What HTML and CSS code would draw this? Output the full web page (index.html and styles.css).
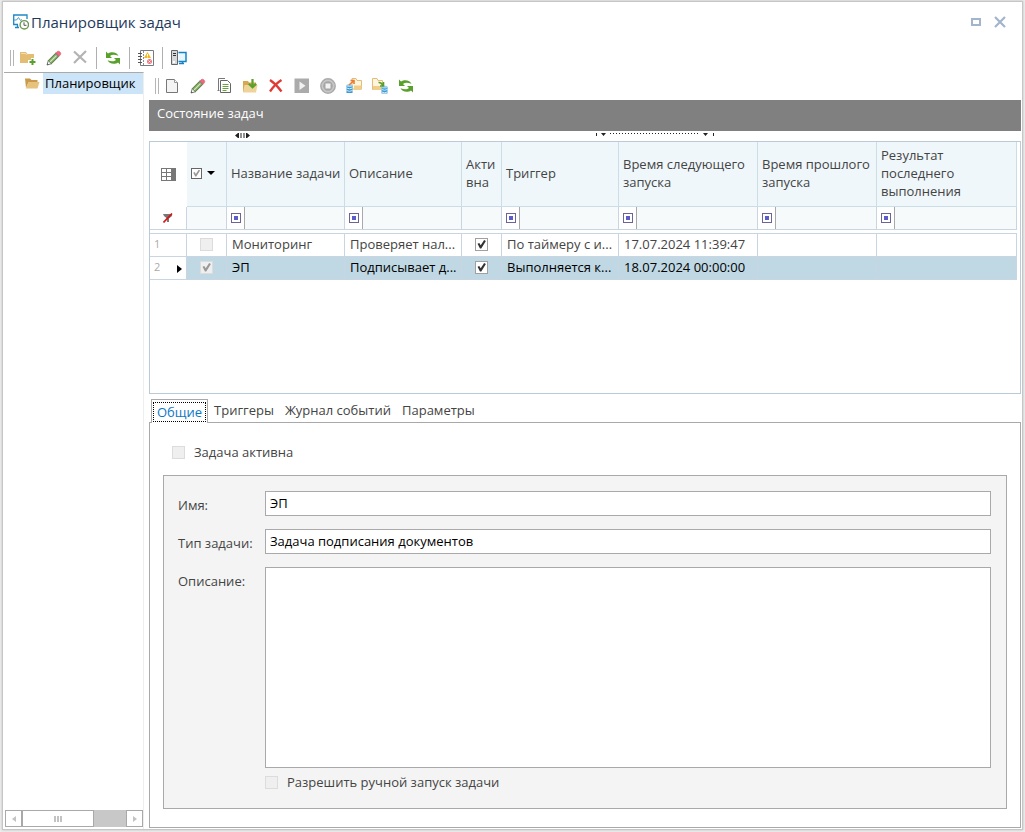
FILE: index.html
```html
<!DOCTYPE html>
<html lang="ru">
<head>
<meta charset="utf-8">
<title>Планировщик задач</title>
<link rel="stylesheet" href="styles.css">
</head>
<body>
<svg class="sprite" aria-hidden="true">
  <symbol id="i-pencil" viewBox="0 0 16 16">
    <path d="M1 15 2.300 10.500 5.500 13.700z" fill="#fff" stroke="#777" stroke-width="1"/>
    <path d="M2.300 10.500 9.800 3 13 6.200 5.500 13.700z" fill="#7da65a" stroke="#5b7a45" stroke-width="1"/>
    <path d="M4 12 11.400 4.600" stroke="#d3e6c3" stroke-width="1.200"/>
    <path d="M9.800 3 11 1.800Q12.500.500 14 2T14.200 5L13 6.200z" fill="#ee6a78" stroke="#d9536a" stroke-width=".6"/>
    <path d="M9.300 3.500 12.500 6.700" stroke="#888" stroke-width="1.200"/>
    <path d="M1 15 1.500 13.200 2.800 14.500z" fill="#555"/>
  </symbol>
  <symbol id="i-refresh" viewBox="0 0 16 16">
    <path d="M1 1.500V8H7L5 6C7 4.500 9.500 4.300 13.500 5.800 12.500 3 7 .5 3 3.600z" fill="#5aa02c"/>
    <path d="M15 14.500V8H9L11 10C9 11.500 6.500 11.700 2.500 10.200 3.500 13 9 15.500 13 12.400z" fill="#5aa02c"/>
  </symbol>
</svg>
<div class="window">
  <header class="titlebar">
    <svg class="icon" viewBox="0 0 16 16"><path d="M5 10.500H.700V1H14V5" fill="none" stroke="#1e88c7" stroke-width="1.300"/><path d="M1 6H3.500L5.500 3.500 7.500 6.500 9 5.500" fill="none" stroke="#4a9bcb" stroke-width="1"/><path d="M2 13.500H6M4.500 11V13" stroke="#1e88c7" stroke-width="1.300"/><circle cx="11.300" cy="10.800" r="4.200" fill="#fff" stroke="#6a9c4c" stroke-width="1.400"/><path d="M11 8.300V11.300H13.500" fill="none" stroke="#555" stroke-width="1"/></svg>
    <h1>Планировщик задач</h1>
    <div class="window-buttons">
      <button aria-label="Развернуть"><svg width="10" height="8"><path d="M1 1H9V7H1z" fill="none" stroke="#a2b5cd" stroke-width="2"/></svg></button>
      <button aria-label="Закрыть"><svg width="12" height="12"><path d="M1 1 11 11M11 1 1 11" stroke="#a2b5cd" stroke-width="2.200"/></svg></button>
    </div>
  </header>
  <div class="toolbar toolbar-main">
    <span class="grip"></span>
    <button aria-label="Создать папку"><svg class="icon" viewBox="0 0 16 16"><path d="M0 2H6L7.500 4H14V8H11V10H8V13H0z" fill="#e3bd74"/><path d="M1 3.500H6L7 5" stroke="#f0dcae" fill="none"/><path d="M12.500 9V15M9.500 12H15.500" stroke="#5aa02c" stroke-width="2"/></svg></button>
    <button aria-label="Изменить"><svg class="icon"><use href="#i-pencil"/></svg></button>
    <button aria-label="Удалить"><svg class="icon" viewBox="0 0 16 16"><path d="M2 1.500 14 12.500M14 1 2 13" stroke="#b3b3b3" stroke-width="2.200"/></svg></button>
    <span class="sep"></span>
    <button aria-label="Обновить"><svg class="icon"><use href="#i-refresh"/></svg></button>
    <span class="sep"></span>
    <button aria-label="Журнал"><svg class="icon" viewBox="0 0 16 16"><path d="M2.500.5H15.500V15.500H2.500z" fill="#fff" stroke="#777b80"/><path d="M5.500 1V15" stroke="#8a8d91" stroke-dasharray="2 1"/><path d="M0 3.500H4M0 6.500H4M0 9.500H4M0 12.500H4" stroke="#555" /><path d="M9.500 2 13 8H6z" fill="#f3b81c"/><path d="M9.500 4V6M9.500 6.500V7.500" stroke="#fff"/><circle cx="11.500" cy="11.500" r="2.500" fill="#e77980"/><path d="M10.500 10.500 12.500 12.500M12.500 10.500 10.500 12.500" stroke="#fff" stroke-width=".8"/></svg></button>
    <span class="sep"></span>
    <button aria-label="Серверы"><svg class="icon" viewBox="0 0 16 16"><path d="M.5.5H6.500V14.500H.5z" fill="#d8d8d8" stroke="#63676b"/><path d="M2 3.500H5M2 5.500H5" stroke="#333"/><path d="M2 12H4" stroke="#fff" stroke-width="2"/><path d="M7.500 2.500H15V11.500H7.500" fill="#eaf6fd" stroke="#1484c8" stroke-width="1.500"/><path d="M8 13.500H13M11.500 11.500V13.500" stroke="#1484c8" stroke-width="1.500"/></svg></button>
  </div>
  <div class="workspace">
    <aside class="sidebar">
      <div class="tree">
        <svg class="icon" viewBox="0 0 16 16"><path d="M0 2.500H5L6.500 4H12.500V6.500H3.500L1 12z" fill="#c99a4b"/><path d="M3.500 6H14.500L12.500 12.500H.8z" fill="#e6c27c"/></svg>
        <a href="#tasks">Планировщик</a>
      </div>
      <div class="scrollbar">
        <button aria-label="Влево"><svg width="4" height="6"><path d="M4 0V6L0 3z" fill="#c3c3c3"/></svg></button>
        <div class="thumb"><i></i><i></i><i></i></div>
        <div class="track"></div>
        <button aria-label="Вправо"><svg width="4" height="6"><path d="M0 0V6L4 3z" fill="#c3c3c3"/></svg></button>
      </div>
    </aside>
    <main class="content" id="tasks">
      <div class="toolbar toolbar-tasks">
        <span class="grip"></span>
        <button aria-label="Создать"><svg class="icon" viewBox="0 0 16 16"><path d="M2.500 1.500H10.500L13.500 4.500V14.500H2.500z" fill="#f4f4f4" stroke="#777" /><path d="M10.500 1.500V4.500H13.500" fill="#fff" stroke="#999"/></svg></button>
        <button aria-label="Изменить задачу"><svg class="icon"><use href="#i-pencil"/></svg></button>
        <button aria-label="Копировать"><svg class="icon" viewBox="0 0 16 16"><path d="M2.500 12.500V.5H9" fill="none" stroke="#777"/><path d="M1.500 12.500H3.500" stroke="#777"/><path d="M4.500 2.500H11.500L14.500 5.500V14.500H4.500z" fill="#fff" stroke="#666"/><path d="M6.500 6.500H12.500M6.500 8.500H12.500M6.500 10.500H12.500M6.500 12.500H10.500" stroke="#6ca045"/></svg></button>
        <button aria-label="Импорт"><svg class="icon" viewBox="0 0 16 16"><path d="M1 3H6L7 4.500H14V14H1z" fill="#d8a850"/><path d="M2.500 7H15.500L14 14.500H1z" fill="#efd49a"/><path d="M10.500 1V9M6.800 5.800 10.500 9.300 14.200 5.800" fill="none" stroke="#5aa02c" stroke-width="2.200"/></svg></button>
        <button aria-label="Удалить задачу"><svg class="icon" viewBox="0 0 16 16"><path d="M2 2Q8 6 13.500 13.500M13.500 2Q7 6 2 13.500" fill="none" stroke="#e03a35" stroke-width="2.300"/></svg></button>
        <button aria-label="Запустить"><svg class="icon" viewBox="0 0 16 16"><path d="M.5.5H15V15H.5z" fill="#ababab"/><path d="M5.500 3.500 11.500 7.700 5.500 12z" fill="#f2f2f2"/></svg></button>
        <button aria-label="Остановить"><svg class="icon" viewBox="0 0 16 16"><circle cx="8" cy="8" r="7.200" fill="#c7c7c7" stroke="#ababab" stroke-width="1.500"/><circle cx="8" cy="8" r="4.800" fill="#a6a6a6"/><path d="M5.500 5.500H10.500V10.500H5.500z" fill="#f2f2f2"/></svg></button>
        <button aria-label="Выгрузить"><svg class="icon" viewBox="0 0 16 16"><path d="M6 .5H10L11 2.500H15.500V11H6z" fill="#fff5df" stroke="#e2bd75"/><path d="M8 7.500H15.500V12H8z" fill="#efce8c"/><path d="M.5 7.500H6.500V15H.5z" fill="#3a98d4"/><ellipse cx="3.500" cy="7.500" rx="3" ry="1.500" fill="#9bd0f0"/><path d="M.5 10Q3.500 11.500 6.500 10M.5 12.500Q3.500 14 6.500 12.500" fill="none" stroke="#cfe9f8"/><path d="M3 7 8 2.500M4.500 2.500H8V6" stroke="#ee7a32" stroke-width="1.600" fill="none"/></svg></button>
        <button aria-label="Загрузить"><svg class="icon" viewBox="0 0 16 16"><path d="M.5.500H5L6 2.500H10.500V11.500H.5z" fill="#fff5df" stroke="#e2bd75"/><path d="M1 8H9V12H1z" fill="#efce8c"/><path d="M9.500 9H15.500V15.500H9.500z" fill="#3a98d4"/><ellipse cx="12.500" cy="9" rx="3" ry="1.500" fill="#9bd0f0"/><path d="M9.500 11.500Q12.500 13 15.500 11.500M9.500 14Q12.500 15.500 15.500 14" fill="none" stroke="#cfe9f8"/><path d="M6.500 4.500Q9 4 11 7.500M11.500 4V8H8" stroke="#559d2d" stroke-width="1.600" fill="none"/></svg></button>
        <button aria-label="Обновить задачи"><svg class="icon"><use href="#i-refresh"/></svg></button>
      </div>
      <h2>Состояние задач</h2>
      <div class="drop-hints">
        <svg width="15" height="5"><path d="M3 0V5L0 2.500zM12 0V5L15 2.500z" fill="#222"/><path d="M3.500 0V5M11.500 0V5M6 0V5M9 0V5" stroke="#222"/></svg>
        <svg width="120" height="4"><path d="M1.500 0V3M118.500 0V3" stroke="#222"/><path d="M6 0H11L8.500 3zM108 0H113L110.500 3z" fill="#222"/><path d="M15 .5H104" stroke="#222" stroke-dasharray="1 2"/></svg>
      </div>
      <div class="grid">
        <table>
          <colgroup><col class="c-num"><col class="c-check"><col class="c-name"><col class="c-desc"><col class="c-active"><col class="c-trigger"><col class="c-next"><col class="c-prev"><col></colgroup>
          <thead>
            <tr class="heads">
              <th class="corner"><svg width="15" height="13"><path d="M0 0H15V13H0z" fill="#777"/><path d="M1 1H5V4H1zM6 1H10V4H6zM1 5H5V8H1zM6 5H10V8H6zM1 9H5V12H1zM6 9H10V12H6z" fill="#fff"/></svg></th>
              <th><span class="check-all"><input type="checkbox" class="tick" checked aria-label="Выбрать все"><svg width="8" height="4"><path d="M0 0H8L4 4z" fill="#000"/></svg></span></th>
              <th>Название задачи</th><th>Описание</th><th>Акти<br>вна</th><th>Триггер</th><th>Время следующего запуска</th><th>Время прошлого запуска</th><th>Результат последнего выполнения</th>
            </tr>
            <tr class="filters">
              <td class="corner"><svg width="10" height="10" viewBox="0 0 10 10"><path d="M0 1H9V3L6 5.500V9H4V5.500L1 3z" fill="#777"/><path d="M.5 9.500 9 .5" stroke="#d11" stroke-width="1.600"/></svg></td>
              <td></td>
              <td><div class="filter"><button aria-label="Условие"><i></i></button><input aria-label="Фильтр: название"></div></td>
              <td><div class="filter"><button aria-label="Условие"><i></i></button><input aria-label="Фильтр: описание"></div></td>
              <td></td>
              <td><div class="filter"><button aria-label="Условие"><i></i></button><input aria-label="Фильтр: триггер"></div></td>
              <td><div class="filter"><button aria-label="Условие"><i></i></button><input aria-label="Фильтр: следующий запуск"></div></td>
              <td><div class="filter"><button aria-label="Условие"><i></i></button><input aria-label="Фильтр: прошлый запуск"></div></td>
              <td><div class="filter"><button aria-label="Условие"><i></i></button><input aria-label="Фильтр: результат"></div></td>
            </tr>
            <tr class="spacer"><td colspan="9"></td></tr>
          </thead>
          <tbody>
            <tr>
              <td><div class="num"><span>1</span></div></td>
              <td class="mid"><input type="checkbox" class="tick" disabled aria-label="Выбрать Мониторинг"></td>
              <td>Мониторинг</td><td>Проверяет нал...</td>
              <td class="mid"><input type="checkbox" class="tick" checked aria-label="Активна"></td>
              <td>По таймеру с и...</td><td>17.07.2024 11:39:47</td><td></td><td></td>
            </tr>
            <tr class="selected">
              <td><div class="num"><span>2</span><svg width="5" height="8"><path d="M0 0V8L5 4z" fill="#000"/></svg></div></td>
              <td class="mid"><input type="checkbox" class="tick" checked disabled aria-label="Выбрать ЭП"></td>
              <td>ЭП</td><td>Подписывает д...</td>
              <td class="mid"><input type="checkbox" class="tick" checked aria-label="Активна"></td>
              <td>Выполняется к...</td><td>18.07.2024 00:00:00</td><td></td><td></td>
            </tr>
          </tbody>
        </table>
      </div>
      <div class="tabs" role="tablist">
        <button role="tab" class="active" aria-selected="true"><span>Общие</span></button>
        <button role="tab">Триггеры</button>
        <button role="tab">Журнал событий</button>
        <button role="tab">Параметры</button>
      </div>
      <section class="panel">
        <div class="check-row active-row"><input type="checkbox" class="tick" id="active" disabled><label for="active">Задача активна</label></div>
        <div class="form">
          <label for="name">Имя:</label><input id="name" type="text" value="ЭП">
          <label for="type">Тип задачи:</label><input id="type" type="text" value="Задача подписания документов">
          <label for="desc">Описание:</label><textarea id="desc"></textarea>
          <div class="check-row manual-row"><input type="checkbox" class="tick" id="manual" disabled><label for="manual">Разрешить ручной запуск задачи</label></div>
        </div>
      </section>
    </main>
  </div>
</div>
</body>
</html>
```
FILE: styles.css
```css
* { box-sizing: border-box; }
body {
  margin: 0;
  padding: 1px 2px 2px;
  height: 100vh;
  background: #ececec;
  font: 13px/18px "Open Sans", "Noto Sans", sans-serif;
  color: #444;
}
button { padding: 0; border: 0; background: none; font: inherit; color: inherit; }
input, textarea { font: inherit; margin: 0; }
svg { display: block; }
.sprite { position: absolute; width: 0; height: 0; }
.icon { width: 16px; height: 16px; flex: none; }

.window {
  display: flex;
  flex-direction: column;
  height: 100%;
  background: #fff;
  border: 1px solid #c6c6c6;
  box-shadow: 0 0 2px #bbb;
}
.titlebar { display: flex; align-items: center; height: 40px; margin-bottom: 2px; padding: 0 16px 0 10px; gap: 2px; }
h1 { margin: 0; font-size: 15px; line-height: 20px; font-weight: 400; color: #1e395b; }
.window-buttons { display: flex; align-items: center; gap: 13px; margin-left: auto; }

.toolbar { display: flex; align-items: center; }
.toolbar button { display: flex; justify-content: center; width: 26px; }
.toolbar-main { height: 27px; padding-left: 7px; }
.toolbar-main .grip { margin-right: 1px; }
.toolbar-tasks { height: 25px; margin-bottom: 2px; padding-left: 6px; }
.grip { width: 4px; height: 16px; border: solid #b5b5b5; border-width: 0 1px; }
.sep { width: 1px; height: 22px; margin: 0 3px; background: #b0b0b0; }

.workspace { display: flex; flex: 1; min-height: 0; }
.sidebar {
  display: flex;
  flex-direction: column;
  justify-content: space-between;
  width: 140px;
  margin: 1px 0 0 1px;
  padding: 0 0 2px 1px;
  border-top: 1px solid #aaa;
  border-right: 1px solid #eee;
}
.tree { display: flex; align-items: center; gap: 2px; padding-left: 20px; }
.tree a { flex: 1; padding-left: 2px; line-height: 21px; color: #000; text-decoration: none; background: #cce4f7; }
.scrollbar { display: flex; width: 138px; height: 17px; background: #c8c8c8; }
.scrollbar button, .thumb { display: flex; align-items: center; justify-content: center; border: 1px solid #a9a9a9; background: #fff; }
.scrollbar button { width: 17px; }
.thumb { width: 72px; gap: 1px; }
.thumb i { width: 2px; height: 6px; background: #c3c3c3; }
.track { flex: 1; }

.content { display: flex; flex-direction: column; flex: 1; min-width: 0; padding: 2px 1px 1px 5px; }
h2 { margin: 0; padding: 4px 8px 9px; font-size: 13px; line-height: 18px; font-weight: 400; color: #fff; background: #808080; }
.drop-hints { display: flex; justify-content: space-between; height: 10px; padding: 2px 306px 0 86px; }

.grid { flex: none; height: 253px; padding-right: 3px; border: 1px solid #b9cbd9; }
table { width: 100%; table-layout: fixed; border-spacing: 0; }
.c-num { width: 37px; }
.c-check, .c-active { width: 40px; }
.c-name { width: 118px; }
.c-desc, .c-trigger { width: 117px; }
.c-next { width: 139px; }
.c-prev { width: 119px; }
th, td { padding: 0 0 0 5px; border: solid #c9d6e1; border-width: 0 1px 1px 0; white-space: nowrap; overflow: hidden; }
th { padding: 0 0 2px 4px; font-weight: 400; text-align: left; white-space: normal; background: #eff7fb; border-color: #cbdde6; }
.heads th { height: 65px; }
.filters td { height: 23px; padding: 0; background: #f6fafb; }
.heads .corner { padding: 0 0 0 11px; background: #fff; border-width: 0; }
.filters .corner { padding-left: 13px; background: #fff; }
.spacer td { height: 4px; padding: 0; border-right: 0; }
tbody td { height: 23px; padding-bottom: 2px; line-height: 18px; }
tbody .mid { padding: 0 0 2px; }
.mid .tick { margin: 0 auto; }
.selected td { color: #000; background: #bfd8e3; }
.selected td:first-child { background: #fff; }
.check-all { display: flex; align-items: center; gap: 5px; }
.check-all .tick { width: 11px; height: 11px; border-color: #666; color: #999; }
.filter { display: flex; height: 22px; }
.filter button { display: flex; align-items: center; justify-content: center; width: 17px; padding-left: 1px; background: #fff; }
.filter i { width: 10px; height: 10px; padding: 2px; border: 1px solid #6a6596; background: #5c5ccb content-box; }
.filter input { flex: 1; min-width: 0; border: 0; border-left: 1px solid #a9a9a9; background: none; }
.num { display: flex; align-items: center; justify-content: space-between; padding-right: 4px; color: #aaa; }
.num span { font-size: 11px; line-height: 18px; }
.num svg { margin-top: 4px; }
tbody td:first-child { padding: 0 0 3px 4px; }

.tick {
  appearance: none;
  display: block;
  flex: none;
  width: 13px;
  height: 13px;
  border: 1px solid #a0a0a0;
  background: #fff;
  color: #333;
}
.tick:disabled { border-color: #dcdcdc; background: #efefef; color: #999; }
.tick:checked::before {
  content: "";
  display: block;
  width: 100%;
  height: 100%;
  background: currentColor;
  clip-path: polygon(14% 48%, 30% 40%, 43% 62%, 74% 14%, 90% 22%, 48% 90%, 36% 90%);
}

.tabs { display: flex; padding: 5px 0 0 2px; }
.tabs button { height: 23px; padding: 0 5px 0 6px; line-height: 23px; }
.tabs .active { position: relative; margin-bottom: -1px; height: 24px; padding: 1px; border: 1px solid #a9a9a9; border-bottom: 0; background: #fff; color: #0a78c8; }
.tabs .active span { display: block; height: 20px; padding: 0 3px; line-height: 18px; border: 1px dotted #000; }
.panel { display: flex; flex: 1; flex-direction: column; min-height: 0; padding: 23px 13px 18px; border: 1px solid #a9a9a9; }
.check-row { display: flex; align-items: center; height: 13px; gap: 9px; }
.check-row label { padding-bottom: 2px; }
.active-row { padding-left: 9px; margin-bottom: 16px; }
.form {
  flex: 1;
  display: grid;
  grid-template-columns: 87px 1fr;
  grid-template-rows: 25px 25px 1fr 14px;
  row-gap: 13px;
  padding: 15px 15px 13px 14px;
  border: 1px solid #a9a9a9;
  background: #f4f4f4;
}
.form > label { padding-top: 5px; }
.form > input, .form > textarea { width: 100%; min-width: 0; padding: 0 4px 2px; border: 1px solid #a9a9a9; border-radius: 0; background: #fff; color: #000; resize: none; }
.form > textarea { height: 100%; }
.manual-row { grid-column: 2; margin-top: -5px; }
```
